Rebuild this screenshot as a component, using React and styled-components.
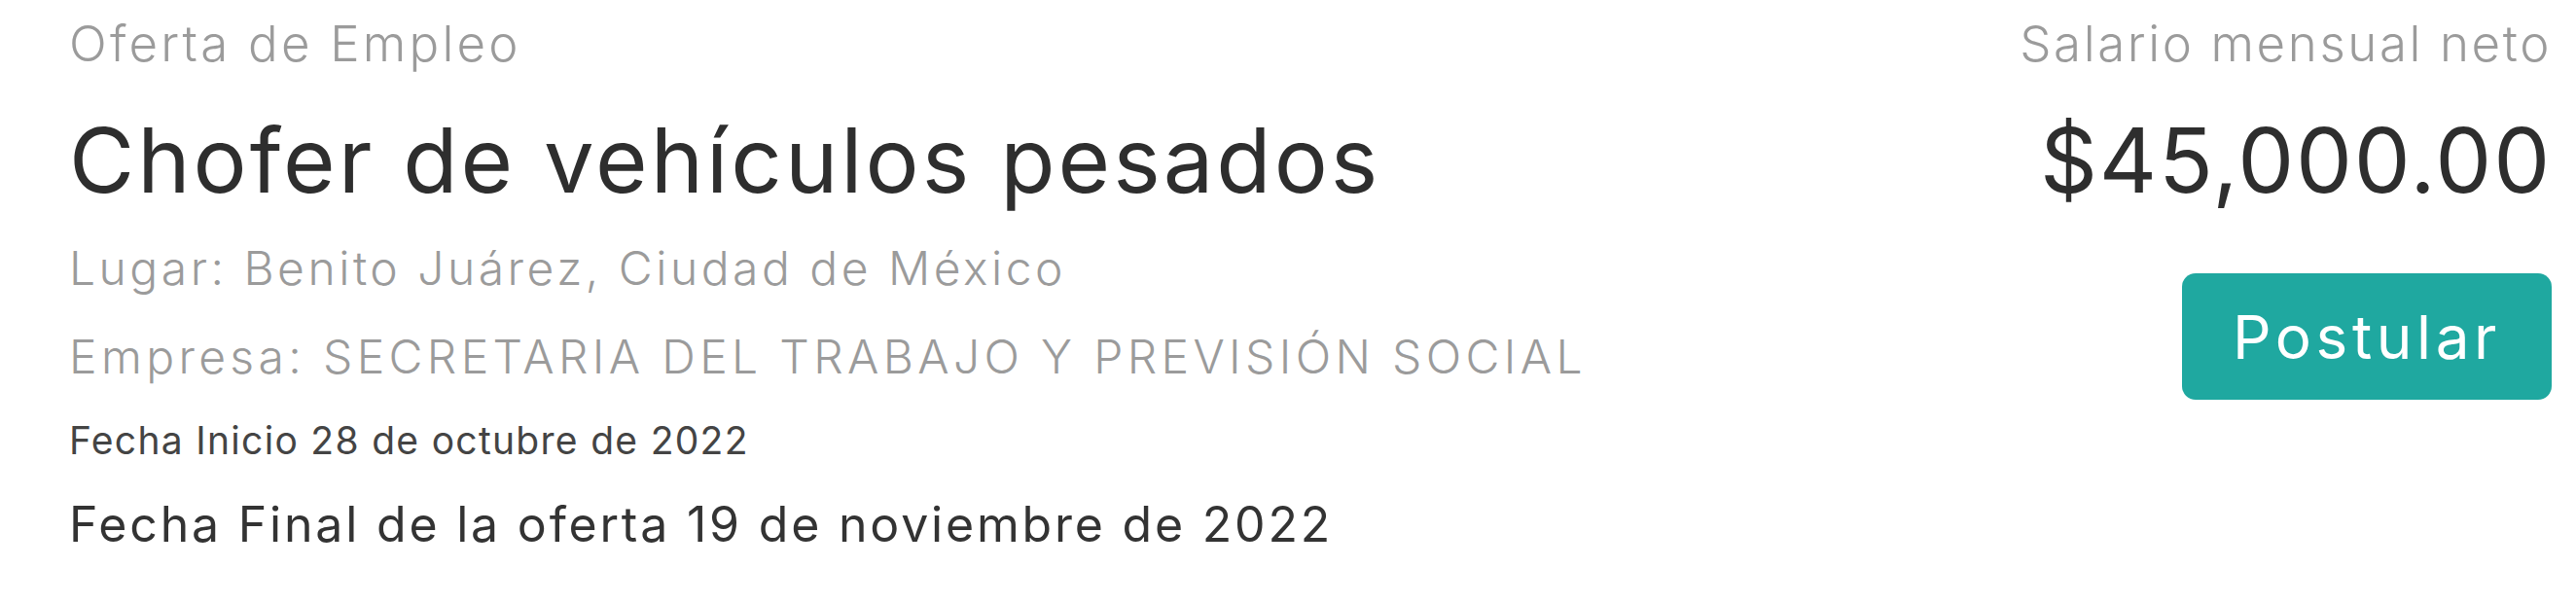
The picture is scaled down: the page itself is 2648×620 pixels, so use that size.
import React from 'react';
import styled, { createGlobalStyle } from 'styled-components';

const GlobalStyle = createGlobalStyle`
  html, body {
    margin: 0;
    padding: 0;
    background: #ffffff;
  }
  body {
    font-family: Inter, "Noto Sans", "Liberation Sans", sans-serif;
  }
`;

const Card = styled.div`
  display: flex;
  justify-content: space-between;
  align-items: flex-start;
  width: 2648px;
  height: 620px;
  box-sizing: border-box;
  padding: 10px 25px 0 71px;
`;

const Column = styled.div`
  display: flex;
  flex-direction: column;
  align-items: ${p => (p.right ? 'flex-end' : 'flex-start')};
`;

const Text = styled.div`
  font-size: ${p => p.size}px;
  line-height: ${p => p.lh}px;
  font-weight: ${p => p.weight || 400};
  color: ${p => p.color || '#333'};
  letter-spacing: ${p => p.ls || 0}px;
  margin-top: ${p => p.mt || 0}px;
  white-space: nowrap;
`;

const PostularButton = styled.button`
  margin-top: 61px;
  width: 380px;
  height: 130px;
  border: none;
  border-radius: 14px;
  background-color: #1fa8a0;
  color: #ffffff;
  font-family: Inter, "Noto Sans", "Liberation Sans", sans-serif;
  font-size: 62px;
  font-weight: 400;
  letter-spacing: 4.6px;
  cursor: pointer;
`;

export default function App() {
  return (
    <>
      <GlobalStyle />
      <Card>
        <Column>
          <Text size={51} lh={70} weight={300} color="#9b9b9b" ls={3.2}>Oferta de Empleo</Text>
          <Text size={92} lh={110} color="#2e2e2e" ls={3} mt={30}>Chofer de vehículos pesados</Text>
          <Text size={48} lh={80} weight={300} color="#9b9b9b" ls={3.5} mt={16}>Lugar: Benito Juárez, Ciudad de México</Text>
          <Text size={48} lh={80} weight={300} color="#9b9b9b" ls={4.35} mt={11}>Empresa: SECRETARIA DEL TRABAJO Y PREVISIÓN SOCIAL</Text>
          <Text size={39} lh={70} color="#444" ls={1.3} mt={11}>Fecha Inicio 28 de octubre de 2022</Text>
          <Text size={50} lh={80} color="#333" ls={2.8} mt={11}>Fecha Final de la oferta 19 de noviembre de 2022</Text>
        </Column>
        <Column right>
          <Text size={51} lh={70} weight={300} color="#9b9b9b" ls={2.6}>Salario mensual neto</Text>
          <Text size={92} lh={110} color="#2e2e2e" ls={1.8} mt={30}>$45,000.00</Text>
          <PostularButton>Postular</PostularButton>
        </Column>
      </Card>
    </>
  );
}
